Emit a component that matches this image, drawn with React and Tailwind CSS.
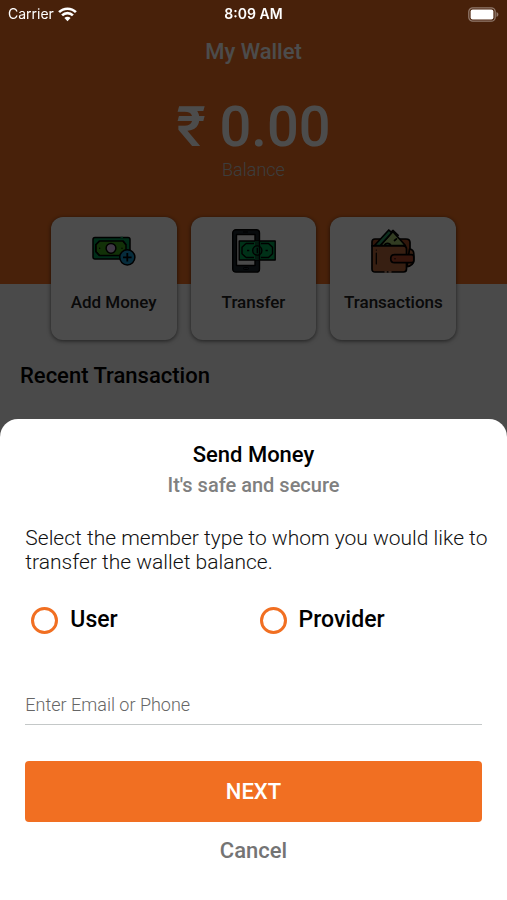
import React from "react";

function WifiIcon() {
  return (
    <svg width="19" height="15" viewBox="0 0 19 15" fill="none" stroke="#fff" strokeWidth="2.6" aria-hidden="true">
      <path d="M1.1 5.2a11.8 11.8 0 0 1 16.8 0" />
      <path d="M4.1 8.4a7.6 7.6 0 0 1 10.8 0" />
      <path d="M9.5 14.2 6.4 11a4.4 4.4 0 0 1 6.2 0z" fill="#fff" stroke="none" />
    </svg>
  );
}

function BatteryIcon() {
  return (
    <svg width="31" height="15" viewBox="0 0 31 15" aria-hidden="true">
      <rect x="0.8" y="0.8" width="26.4" height="13.4" rx="4" fill="none" stroke="#91796c" strokeWidth="1.3" />
      <rect x="2.6" y="2.6" width="22.8" height="9.8" rx="2" fill="#fff" />
      <path d="M28.5 5v5c1.1-.4 1.9-1.4 1.9-2.5S29.600 5.400 28.500 5z" fill="#91796c" />
    </svg>
  );
}

function AddMoneyIcon() {
  return (
    <svg width="44" height="44" viewBox="0 0 44 44" stroke="#000" strokeWidth="1.5" strokeLinejoin="round" aria-hidden="true">
      <rect x="1" y="8.500" width="37" height="21.500" rx="2" fill="#009653" />
      <path d="M7.500 12h23.500l3 3.800v7L31 26.500H7.500L3.800 22.600v-6.800z" fill="#3fa61c" />
      <path d="M7.500 12 3.800 15.800v6.800l3.700 3.900M31 12l3 3.800" fill="none" />
      <circle cx="7.700" cy="19.300" r=".7" fill="#000" stroke="none" />
      <circle cx="30" cy="19.300" r=".7" fill="#000" stroke="none" />
      <circle cx="19" cy="19.300" r="4.900" fill="#d6bde6" />
      <path d="M28.500 8.500h2.500" stroke="#009653" />
      <circle cx="35.300" cy="28.300" r="7.600" fill="#1593c9" />
      <path d="M35.300 24v8.600M31 28.300h8.600" strokeWidth="1.800" />
    </svg>
  );
}

function TransferIcon() {
  return (
    <svg width="44" height="44" viewBox="0 0 44 44" stroke="#000" strokeWidth="1.400" strokeLinejoin="round" aria-hidden="true">
      <rect x=".7" y=".7" width="26.800" height="42.400" rx="3.200" fill="#1c262e" />
      <rect x="4.500" y="5.500" width="18.500" height="31" fill="#f4f4f4" />
      <path d="M11 3h5" strokeWidth="1.200" />
      <rect x="11.500" y="38.500" width="5" height="2" rx="1" fill="#1f2a33" strokeWidth="1" />
      <rect x="7.200" y="12" width="36" height="19" fill="#00a651" />
      <path d="M23 12h4.500v19H23z" fill="#075d35" stroke="none" />
      <path d="M14 14.500h8M14 28.500h8M14 14.500l-4 3.800v6.400l4 3.800M29 14.500h7.500l4 3.800v6.400l-4 3.800H29" fill="none" />
      <circle cx="25.300" cy="21.500" r="4.600" fill="#04884a" />
      <path d="M25.300 18.800v5.400M15 21.500h2.300M33.500 21.500h2.300" />
      <path d="M27.500 12v19" />
    </svg>
  );
}

function WalletIcon() {
  return (
    <svg width="44" height="44" viewBox="0 0 44 44" stroke="#000" strokeWidth="1.700" strokeLinejoin="round" strokeLinecap="round" aria-hidden="true">
      <path d="M1 17V13c0-2 1.500-3 3-3h31c2.500 0 4 1.500 4 3.500V35c0 1.500-1 2.500-2.500 2.500H34" fill="#a34d26" />
      <path d="M38.500 20c3 .4 4.300 2.300 4.300 5v5.500c0 4-3 6.500-6.800 7z" fill="#b8683f" />
      <path d="m9.500 16.500 12.300-14 12.600 14z" fill="#a9ca72" />
      <path d="M3.500 16.500 17.800 1l2.900 2.700L9.200 16.500z" fill="#2e9c65" />
      <path d="m20.300 3 1.800-1.500 5 4.800" fill="none" />
      <path d="M13.500 16.500c.6-3 5.300-3 6.200 0z" fill="#2e9c65" />
      <path d="m23.500 11.500 2-1.700" />
      <path d="M1 16.800h31c2.200 0 3.500 1.200 3.500 3V40c0 2-1.200 3-3 3H4c-2 0-3-1-3-3z" fill="#b8683f" />
      <path d="M23.500 25.700h17c1.500 0 2.300.8 2.300 2v4c0 1.200-.8 2-2.300 2h-17c-5 0-5-8 0-8z" fill="#b3472a" />
      <circle cx="24" cy="29.700" r=".7" fill="#000" stroke="none" />
      <path d="M5.300 24v11M5.300 21v.1" strokeWidth="1.200" />
      <path d="M14 43h1.300M18 43h2" stroke="#e8b092" strokeWidth="1.400" />
    </svg>
  );
}

const actions = [
  { label: "Add Money", Icon: AddMoneyIcon },
  { label: "Transfer", Icon: TransferIcon },
  { label: "Transactions", Icon: WalletIcon },
];

function StatusBar() {
  return (
    <header className="relative z-20 grid h-7 grid-cols-3 items-center px-2 font-['Inter',sans-serif] text-sm text-white">
      <span className="flex items-center gap-1">
        Carrier
        <WifiIcon />
      </span>
      <span className="text-center font-semibold">8:09 AM</span>
      <span className="flex justify-end">
        <BatteryIcon />
      </span>
    </header>
  );
}

function Wallet() {
  return (
    <main>
      <section className="h-[256px] text-center text-white">
        <h1 className="pt-2 text-[22px] leading-8 font-medium">My Wallet</h1>
        <p className="pt-7 text-[56px] leading-[62px] font-medium">₹ 0.00</p>
        <p className="text-lg leading-6 font-light text-[#cccccc]">Balance</p>
      </section>
      <nav className="-mt-[67px] grid grid-cols-3 gap-[14px] px-[10%]">
        {actions.map(({ label, Icon }) => (
          <button
            key={label}
            type="button"
            className="flex h-[123px] flex-col items-center rounded-xl bg-white pt-3 text-[17px] font-medium whitespace-nowrap text-[#222222] shadow-[0_1px_4px_rgba(0,0,0,0.6)]"
          >
            <Icon />
            <span className="mt-[17px] leading-6">{label}</span>
          </button>
        ))}
      </nav>
      <h2 className="px-5 pt-5 text-[22px] leading-8 font-medium text-black">Recent Transaction</h2>
    </main>
  );
}

function MemberOption({ value }) {
  return (
    <label className="flex items-center gap-3 pl-[6px] text-[23px] leading-8 font-medium">
      <input
        type="radio"
        name="member"
        value={value}
        className="size-[27px] appearance-none rounded-full border-3 border-[#f16f22] checked:border-8"
      />
      {value}
    </label>
  );
}

function SendMoneySheet() {
  return (
    <div className="fixed inset-0 z-10 flex flex-col justify-end bg-black/70">
      <form
        role="dialog"
        aria-labelledby="send-title"
        onSubmit={(event) => event.preventDefault()}
        className="flex flex-col rounded-t-[18px] bg-white px-[5%] pt-5 pb-[33px]"
      >
        <h2 id="send-title" className="text-center text-[22px] leading-8 font-medium text-black">
          Send Money
        </h2>
        <p className="text-center text-[20px] leading-7 font-medium text-[#808080]">It's safe and secure</p>
        <p className="-mr-3 mt-[27px] text-[21px] leading-6 font-light text-[#111111]">
          Select the member type to whom you would like to transfer the wallet balance.
        </p>
        <div className="mt-[30px] grid grid-cols-2 text-black">
          <MemberOption value="User" />
          <MemberOption value="Provider" />
        </div>
        <input
          type="text"
          aria-label="Enter Email or Phone"
          placeholder="Enter Email or Phone"
          className="mt-[49px] h-10 border-b border-[#c4c8c8] text-[18px] font-light text-black outline-none placeholder:text-[#666666]"
        />
        <button type="submit" className="mt-9 h-[61px] rounded bg-[#f16f22] text-[22px] font-medium text-white">
          NEXT
        </button>
        <button type="button" className="mt-[13px] self-center text-[22px] leading-8 font-medium text-[#747474]">
          Cancel
        </button>
      </form>
    </div>
  );
}

export default function App() {
  return (
    <div className="min-h-screen bg-[linear-gradient(#f16f22_284px,#f7f7f7_284px)] font-['Roboto',sans-serif]">
      <StatusBar />
      <Wallet />
      <SendMoneySheet />
    </div>
  );
}
